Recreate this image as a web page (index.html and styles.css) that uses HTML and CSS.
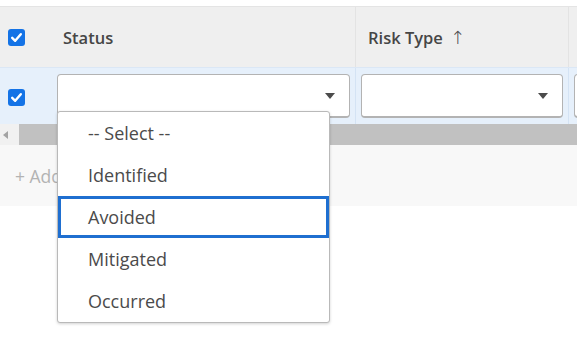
FILE: index.html
```html
<!DOCTYPE html>
<html>
<head>
<meta charset="utf-8">
<link rel="stylesheet" href="styles.css">
</head>
<body>
<div class="page">
  <div class="grid">
    <div class="row header">
      <div class="cell check"><span class="cb"><svg viewBox="0 0 17 17" width="17" height="17"><path d="M4.2 8.8 L7.2 11.8 L12.8 5.2" fill="none" stroke="#fff" stroke-width="2.4" stroke-linecap="round" stroke-linejoin="round"/></svg></span></div>
      <div class="cell col-status"><span class="htext">Status</span></div>
      <div class="cell col-risk"><span class="htext">Risk Type <span class="sort">↑</span></span></div>
      <div class="cell col-more"></div>
    </div>
    <div class="row body">
      <div class="cell check"><span class="cb"><svg viewBox="0 0 17 17" width="17" height="17"><path d="M4.2 8.8 L7.2 11.8 L12.8 5.2" fill="none" stroke="#fff" stroke-width="2.4" stroke-linecap="round" stroke-linejoin="round"/></svg></span></div>
      <div class="cell col-status"><div class="select"><span class="arrow"></span></div></div>
      <div class="cell col-risk"><div class="select"><span class="arrow"></span></div></div>
      <div class="cell col-more"><div class="select"></div></div>
    </div>
    <div class="scrollbar">
      <div class="sb-btn"><span class="sb-tri"></span></div>
      <div class="sb-thumb"></div>
    </div>
    <div class="footer"><span class="add">+ Add</span></div>
  </div>
  <ul class="dropdown">
    <li class="opt">-- Select --</li>
    <li class="opt">Identified</li>
    <li class="opt active">Avoided</li>
    <li class="opt">Mitigated</li>
    <li class="opt">Occurred</li>
  </ul>
</div>
</body>
</html>
```

FILE: styles.css
```css
* { box-sizing: border-box; }
html, body { margin: 0; padding: 0; background: #fff; }
body {
  font-family: "Open Sans", "Liberation Sans", sans-serif;
  color: #4b4b4b;
  width: 577px;
  height: 353px;
  overflow: hidden;
}
.page { position: relative; width: 577px; height: 353px; padding-top: 6px; overflow: hidden; }
.grid { border-top: 1px solid #e4e4e4; width: 577px; overflow: hidden; }
.row { display: flex; }
.header { height: 60px; background: #efefef; align-items: center; }
.body { height: 57px; background: #e6f0fb; border-top: 1px solid #dbe7f5; }
.cell { height: 100%; display: flex; align-items: center; flex-shrink: 0; }
.check { width: 51px; padding-left: 8px; }
.col-status { width: 305px; border-right: 1px solid #e3e3e3; }
.col-risk { width: 213px; border-right: 1px solid #e3e3e3; }
.col-more { width: 60px; }
.body .col-status, .body .col-risk { border-right-color: #d4e3f4; }
.header .col-status, .header .col-risk { padding-left: 12px; }
.body .col-status { padding: 0 5px 0 6px; }
.body .col-risk { padding: 0 5px 0 5px; }
.body .col-more { padding-left: 5px; }
.htext { font-weight: 600; font-size: 16.5px; color: #464646; }
.sort { font-family: "DejaVu Sans", sans-serif; font-weight: 300; font-size: 18px; color: #4b4b4b; margin-left: 3px; }
.cb {
  width: 17px; height: 17px; border-radius: 3px; background: #1473e6;
  display: block;
}
.cb svg { display: block; }
.body .cb { margin-top: 2px; }
.select {
  width: 100%; height: 44px; background: #fff;
  border: 1px solid #b3b3b3; border-bottom-width: 2px; border-radius: 4px;
  position: relative; display: flex; align-items: center; justify-content: flex-end;
  padding-right: 14px;
}
.arrow {
  width: 0; height: 0;
  border-left: 5px solid transparent; border-right: 5px solid transparent;
  border-top: 6px solid #4b4b4b;
}
.scrollbar { display: flex; height: 21px; background: #f1f1f1; }
.sb-btn { width: 19px; display: flex; align-items: center; padding-left: 3px; }
.sb-tri {
  width: 0; height: 0;
  border-top: 4px solid transparent; border-bottom: 4px solid transparent;
  border-right: 5px solid #a3a3a3;
}
.sb-thumb { flex: 1; background: #c1c1c1; }
.footer { height: 61px; background: #f8f8f8; display: flex; align-items: center; padding-left: 15px; }
.add { font-size: 17.5px; color: #b3b3b3; }
.dropdown {
  position: absolute; left: 57px; top: 111px; width: 273px;
  margin: 0; padding: 0; list-style: none; background: #fff;
  border: 1px solid #b9b9b9; border-radius: 3px;
  box-shadow: 0 1px 3px rgba(0,0,0,0.18);
}
.opt {
  height: 42px; display: flex; align-items: center; padding-left: 30px;
  font-size: 18px; color: #4b4b4b;
}
.opt.active { border: 3px solid #1f6fd0; padding-left: 27px; }
```
